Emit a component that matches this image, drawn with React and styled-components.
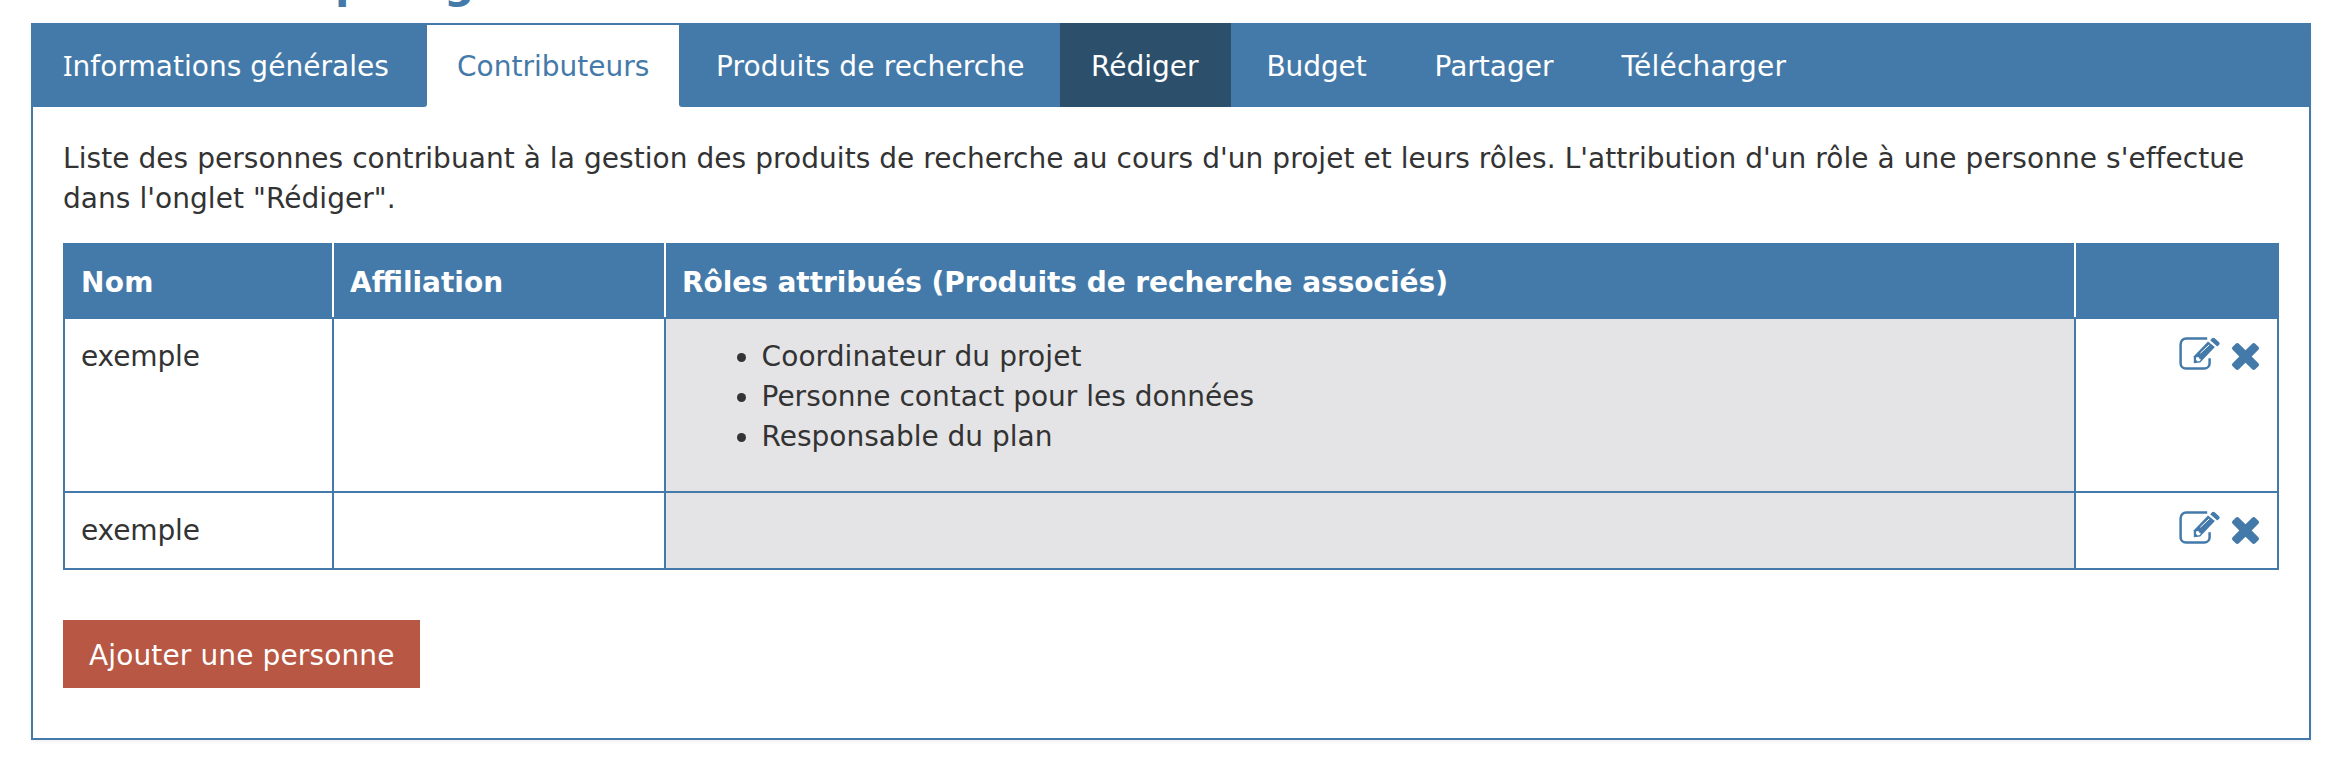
import React from "react";
import styled, { createGlobalStyle, ThemeProvider } from "styled-components";

const theme = {
  blue: "#447aa9",
  navy: "#2c506c",
  grey: "#e4e4e6",
  text: "#333333",
  red: "#b85744",
};

const GlobalStyle = createGlobalStyle`
  * { box-sizing: border-box; }
  body {
    margin: 0;
    background: #fff;
    color: ${theme.text};
    font-family: Verdana, "DejaVu Sans", sans-serif;
    font-size: 28px;
    line-height: 40px;
  }
`;

const Page = styled.main`
  width: 2348px;
  height: 772px;
  padding: 0 37px 0 31px;
  overflow: hidden;
`;

const Heading = styled.h1`
  display: flex;
  align-items: flex-end;
  gap: 79px;
  height: 23px;
  margin: 0;
  padding: 0 0 15px 304px;
  color: ${({ theme }) => theme.blue};
  font-size: 42px;
  font-weight: bold;
  line-height: 49px;
`;

const Panel = styled.section`
  background: #fff;
  box-shadow: 0 2px 4px rgba(0, 0, 0, 0.06);
`;

const TabList = styled.nav`
  display: flex;
  height: 84px;
`;

const Tab = styled.a`
  display: block;
  width: ${({ $width }) => $width}px;
  padding: ${({ $state }) => ($state === "active" ? 22 : 24)}px 0 0 ${({ $indent }) => $indent}px;
  border-radius: ${({ $corner }) =>
    $corner === "right" ? "0 0 3px 0" : $corner === "left" ? "0 0 0 3px" : "0"};
  border-top: ${({ $state, theme }) => ($state === "active" ? `2px solid ${theme.blue}` : "0")};
  background: ${({ $state, theme }) =>
    $state === "active" ? "#fff" : $state === "hover" ? theme.navy : theme.blue};
  color: ${({ $state, theme }) => ($state === "active" ? theme.blue : "#fff")};
  letter-spacing: ${({ $tracking }) => $tracking || 0}px;
  white-space: nowrap;
  ${({ $serifInitial }) => $serifInitial && `&::first-letter { font-family: "Noto Sans"; line-height: 1; }`}
`;

const TabFill = styled.div`
  flex: 1;
  background: ${({ theme }) => theme.blue};
`;

const PanelBody = styled.div`
  height: 633px;
  padding: 32px 30px 0;
  border: 2px solid ${({ theme }) => theme.blue};
  border-top: 0;
`;

const Intro = styled.p`
  margin: 0 0 24px;
  letter-spacing: 0.058px;
`;

const Table = styled.table`
  width: 2216px;
  table-layout: fixed;
  border-collapse: separate;
  border-spacing: 0;
  border: 2px solid ${({ theme }) => theme.blue};
  border-top: 0;
`;

const Column = styled.col`
  width: ${({ $width }) => $width}px;
`;

const HeadCell = styled.th`
  height: 74px;
  padding: 20px 0 0 16px;
  border-right: 2px solid #fff;
  background: ${({ theme }) => theme.blue};
  color: #fff;
  text-align: left;
  vertical-align: top;
  letter-spacing: ${({ $tracking }) => $tracking || 0}px;
  &:last-child { border-right: 0; }
`;

const BodyRow = styled.tr`
  height: ${({ $height }) => $height}px;
`;

const Cell = styled.td`
  padding: 18px 18px 0 16px;
  border-top: 2px solid ${({ theme }) => theme.blue};
  border-right: 2px solid ${({ theme }) => theme.blue};
  background: ${({ $shaded, theme }) => ($shaded ? theme.grey : "#fff")};
  letter-spacing: ${({ $tracking }) => $tracking || 0}px;
  vertical-align: top;
  &:last-child { border-right: 0; }
`;

const RoleList = styled.ul`
  margin: 0;
  padding: 0 0 0 55px;
  list-style: none;
`;

const Role = styled.li`
  display: flex;
  align-items: center;
  gap: 15.5px;
  letter-spacing: ${({ $tracking }) => $tracking || 0}px;
  &::before {
    content: "";
    width: 9px;
    height: 9px;
    border-radius: 50%;
    background: ${({ theme }) => theme.text};
  }
`;

const Actions = styled.div`
  display: flex;
  justify-content: flex-end;
  align-items: flex-end;
  gap: 12px;
  height: 33px;
  color: ${({ theme }) => theme.blue};
`;

const Icon = styled.svg`
  display: block;
  width: ${({ $width }) => $width}px;
  height: ${({ $height }) => $height}px;
`;

const AddButton = styled.button`
  display: block;
  width: 357px;
  height: 68px;
  margin-top: 50px;
  padding: 3px 0 0 26px;
  border: 0;
  background: ${({ theme }) => theme.red};
  color: #fff;
  font: inherit;
  letter-spacing: 0.13px;
  text-align: left;
`;

function EditIcon() {
  return (
    <Icon $width={41} $height={33} viewBox="0 0 41 33">
      <path
        d="M28.2 1.6H7.2a5.6 5.6 0 0 0-5.6 5.6v19a5.2 5.2 0 0 0 5.2 5.2h18.6a5.2 5.2 0 0 0 5.2-5.2v-5"
        fill="none"
        stroke="currentColor"
        strokeWidth="2.5"
      />
      <path d="M29 4.6 35.9 10 21.2 25.6 14.8 26.2V19.2z" fill="currentColor" />
      <path
        d="m31.2 3.2 1.9-2q1.2-1 2.6 0l4.4 4q1 1.2.2 2.3l-2 2.1z"
        fill="currentColor"
      />
      <path d="m21.4 16.2 8.8-8.3" stroke="#fff" strokeWidth="1" />
      <path d="m17.2 20.2 2.3-.2.6 1.6 1.7.7-.8 1.8-2.4.3-1.7-1.7z" fill="#fff" />
    </Icon>
  );
}

function RemoveIcon() {
  return (
    <Icon $width={27} $height={27} viewBox="302 366 1188 1188">
      <path
        fill="currentColor"
        d="M1490 1322q0 40-28 68l-136 136q-28 28-68 28t-68-28l-294-294-294 294q-28 28-68 28t-68-28l-136-136q-28-28-28-68t28-68l294-294-294-294q-28-28-28-68t28-68l136-136q28-28 68-28t68 28l294 294 294-294q28-28 68-28t68 28l136 136q28 28 28 68t-28 68l-294 294 294 294q28 28 28 68z"
      />
    </Icon>
  );
}

const tabs = [
  { label: "Informations générales", width: 396, indent: 32, tracking: 0.04, corner: "right", serifInitial: true },
  { label: "Contributeurs", width: 252, indent: 30, state: "active" },
  { label: "Produits de recherche", width: 381, indent: 37, tracking: 0.13, corner: "left" },
  { label: "Rédiger", width: 171, indent: 31, state: "hover" },
  { label: "Budget", width: 169, indent: 35.5, tracking: -0.1 },
  { label: "Partager", width: 188, indent: 34.5 },
  { label: "Télécharger", width: 200, indent: 33.5, tracking: 0.2 },
];

const people = [
  {
    name: "exemple",
    height: 174,
    roles: [
      { label: "Coordinateur du projet", tracking: 0.1 },
      { label: "Personne contact pour les données" },
      { label: "Responsable du plan" },
    ],
  },
  { name: "exemple", height: 77, roles: [] },
];

export default function App() {
  return (
    <ThemeProvider theme={theme}>
      <GlobalStyle />
      <Page>
        <Heading>
          <span>p</span>
          <span>g</span>
        </Heading>
        <Panel>
          <TabList>
            {tabs.map((t) => (
              <Tab
                key={t.label}
                $width={t.width}
                $indent={t.indent}
                $tracking={t.tracking}
                $state={t.state}
                $corner={t.corner}
                $serifInitial={t.serifInitial}
              >
                {t.label}
              </Tab>
            ))}
            <TabFill />
          </TabList>
          <PanelBody>
            <Intro>
              Liste des personnes contribuant à la gestion des produits de recherche au cours d'un
              projet et leurs rôles. L'attribution d'un rôle à une personne s'effectue dans l'onglet
              "Rédiger".
            </Intro>
            <Table>
              <colgroup>
                <Column $width={269} />
                <Column $width={332} />
                <Column $width={1410} />
                <Column $width={201} />
              </colgroup>
              <thead>
                <tr>
                  <HeadCell $tracking={0.3}>Nom</HeadCell>
                  <HeadCell $tracking={0}>Affiliation</HeadCell>
                  <HeadCell $tracking={-0.05}>Rôles attribués (Produits de recherche associés)</HeadCell>
                  <HeadCell />
                </tr>
              </thead>
              <tbody>
                {people.map((p, i) => (
                  <BodyRow key={i} $height={p.height}>
                    <Cell $tracking={-0.12}>{p.name}</Cell>
                    <Cell />
                    <Cell $shaded>
                      {p.roles.length > 0 && (
                        <RoleList>
                          {p.roles.map((r) => (
                            <Role key={r.label} $tracking={r.tracking}>
                              {r.label}
                            </Role>
                          ))}
                        </RoleList>
                      )}
                    </Cell>
                    <Cell>
                      <Actions>
                        <EditIcon />
                        <RemoveIcon />
                      </Actions>
                    </Cell>
                  </BodyRow>
                ))}
              </tbody>
            </Table>
            <AddButton type="button">Ajouter une personne</AddButton>
          </PanelBody>
        </Panel>
      </Page>
    </ThemeProvider>
  );
}
